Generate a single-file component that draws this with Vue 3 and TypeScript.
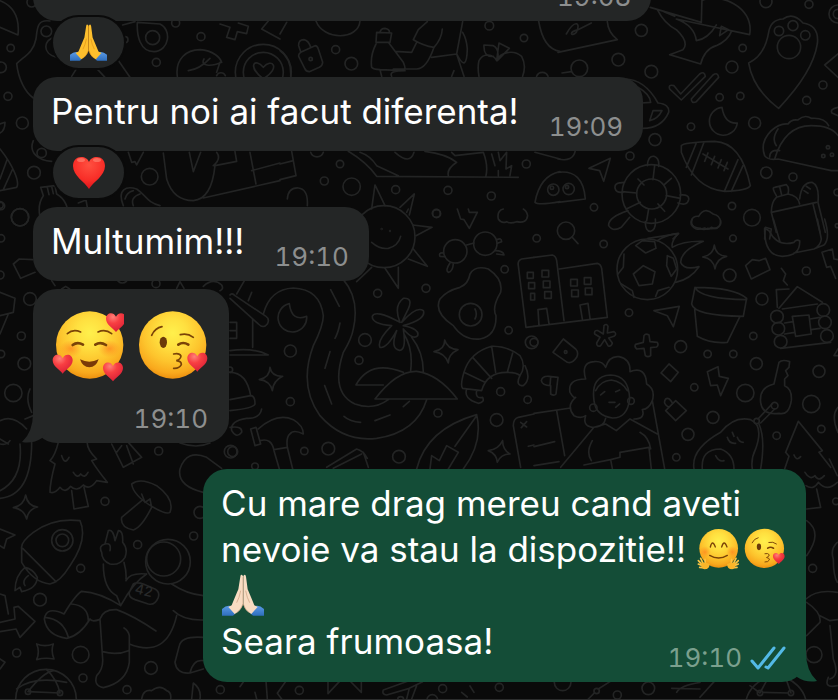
<script setup lang="ts">
type EmojiName = 'pray' | 'heart' | 'hearts-face' | 'kiss' | 'hug'
interface Part { text?: string; emoji?: EmojiName; pale?: boolean }
interface Message {
  id: number
  out?: boolean
  kind: 'line' | 'block' | 'big'
  tail?: boolean
  lines: Part[][]
  time: string
  reaction?: EmojiName
}
interface Doodle { x: number; y: number; d: string; c: number[][] }

const labels: Record<EmojiName, string> = {
  pray: 'Folded hands',
  heart: 'Red heart',
  'hearts-face': 'Smiling face with hearts',
  kiss: 'Face blowing a kiss',
  hug: 'Hugging face',
}

const boxes: Record<EmojiName, number[]> = {
  pray: [42, 46, 126, 126],
  heart: [0, 0, 34, 34],
  'hearts-face': [36, 30, 216, 216],
  kiss: [288, 30, 216, 216],
  hug: [44, 40, 126, 126],
}

function place(name: EmojiName) {
  const [x, y, width, height] = boxes[name]
  return { x, y, width, height }
}

const messages: Message[] = [
  { id: 1, kind: 'line', lines: [[]], time: '19:08', reaction: 'pray' },
  { id: 2, kind: 'line', lines: [[{ text: 'Pentru noi ai facut diferenta!' }]], time: '19:09', reaction: 'heart' },
  { id: 3, kind: 'line', lines: [[{ text: 'Multumim!!!' }]], time: '19:10' },
  { id: 4, kind: 'big', tail: true, lines: [[{ emoji: 'hearts-face' }, { emoji: 'kiss' }]], time: '19:10' },
  {
    id: 5,
    kind: 'block',
    out: true,
    tail: true,
    lines: [
      [{ text: 'Cu mare drag mereu cand aveti' }],
      [{ text: 'nevoie va stau la dispozitie!! ' }, { emoji: 'hug' }, { emoji: 'kiss' }],
      [{ emoji: 'pray', pale: true }],
      [{ text: 'Seara frumoasa!' }],
    ],
    time: '19:10',
  },
]

// Wallpaper tiles: every tile is drawn at three times its size on screen.
const doodles: Doodle[] = [
  {
    x: 0, y: 0,
    c: [[139, 97, 16], [95, 10, 14], [32, 147, 11], [3, 205, 16], [24, 292, 12], [67, 372, 18], [102, 521, 19], [458, 116, 21], [603, 113, 12], [469, 190, 12], [527, 72, 12], [449, 533, 25], [3, 621, 11], [60, 655, 26], [125, 462, 14], [375, 122, 9], [790, 220, 84], [790, 220, 60]],
    d: 'M0 5Q62 30 54 108L0 85M150 66C110 60 112 90 108 120C100 160 75 170 50 194C55 240 75 280 100 297M165 115C130 120 125 165 170 175M412 70C410 110 420 158 462 158C510 155 515 90 480 75L412 70M368 78L405 68M215 232L232 205M290 208L315 235M352 180L390 235M660 75L690 85L680 115L705 122L712 98L740 104L745 82L715 72M805 66L785 90L840 120M532 232C525 180 560 152 600 152C640 155 660 175 665 190C630 205 600 200 612 180M565 215Q600 210 630 178M650 230a14 14 0 0 1 26 0M660 190L650 220M790 240C740 200 765 175 790 205C815 175 845 205 790 240M100 425C85 460 115 485 155 487M0 450C40 500 60 550 50 565L0 575M22 480L0 540M38 510L10 572M0 375L15 370Q15 395 0 402M130 590L122 565L165 560L170 585Q205 605 205 655M130 590Q112 615 120 655M142 565l5 22M155 562l5 22M235 612L258 603L262 625M370 620C350 570 380 560 410 570C440 590 440 610 480 620M375 600Q380 580 400 575M400 620Q390 595 420 585M385 460L395 490L405 488L410 498L430 460M490 462L500 540Q520 605 580 605Q635 600 645 500L710 487L705 458M568 460L580 518L602 460M650 460Q665 480 640 500M750 460L768 555M610 597L840 545M755 515L840 492',
  },
  {
    x: 280, y: 0,
    c: [[167, 152, 12], [214, 194, 19], [628, 80, 13], [732, 117, 11], [180, 495, 11], [133, 546, 12], [215, 563, 26], [347, 572, 12], [504, 574, 12], [634, 591, 12], [469, 643, 12], [739, 495, 12], [92, 180, 5], [820, 572, 17], [816, 566, 5]],
    d: 'M108 66C130 125 235 125 240 66M62 160L105 140Q112 140 115 150L128 190Q128 200 118 205L88 218Q78 218 74 208L56 172Q55 165 62 160M62 158L56 140Q55 122 72 122Q86 125 92 145M288 130L290 100L335 102L330 130ZM300 100Q302 88 315 88Q330 90 328 102M288 135Q270 170 275 205Q280 212 300 212L370 215Q380 212 370 190L325 130M345 157L395 160L410 130M400 122L415 92L442 68M400 122Q430 140 462 145Q440 210 410 210L340 210M462 145Q485 120 487 90M455 175L530 165L548 68M530 165Q560 225 562 150Q560 120 548 100M530 165L552 232M515 232L522 215M300 212L305 232M335 232Q325 215 375 215M650 185C640 165 610 160 597 185Q592 205 597 232M650 185C660 160 700 150 725 172Q740 200 728 232M650 185L657 132L688 148L652 185Q660 150 640 140L612 138Q610 175 640 172M776 66Q790 150 840 157M770 232a18 18 0 0 1 34 0M0 105L20 70M0 155Q35 180 32 232M35 457L48 530L0 542M0 495L40 485M92 460a20 20 0 0 0 38 0M205 457Q260 490 290 532L715 535M240 460Q270 470 290 500L355 530M345 460Q390 500 402 460M435 457Q500 465 530 490Q500 510 505 530M515 460L525 470L610 460Q625 500 618 530M635 465L645 500M655 460L660 485L680 460L678 510L695 500L690 530M655 515V530M22 600Q25 565 55 567Q85 570 82 620M765 460L840 480M840 518Q780 530 765 610Q775 620 840 608M275 630L285 558L315 620M360 625L403 585L388 648',
  },
  {
    x: 558, y: 0,
    c: [[250, 94, 18], [181, 182, 19], [280, 218, 19], [64, 208, 25], [624, 8, 18], [753, 16, 12], [663, 96, 14], [705, 80, 15], [742, 109, 14], [693, 144, 35], [554, 147, 11], [522, 204, 18], [485, 295, 11], [547, 291, 11], [590, 372, 18], [399, 383, 11], [795, 258, 12], [746, 304, 12], [291, 422, 18], [216, 471, 12], [625, 521, 17], [705, 534, 12], [108, 625, 11], [32, 570, 17], [27, 564, 5], [522, 621, 11], [582, 656, 25], [838, 580, 10], [840, 45, 27], [840, 45, 14], [796, 471, 5], [822, 467, 5], [810, 445, 5], [280, 585, 88], [281, 585, 45]],
    d: 'M277 25L430 70L432 0M432 5C480 -20 590 20 575 107L355 60M298 32Q320 75 355 92Q395 130 375 152L335 167L428 195Q440 150 475 140Q510 125 520 98M355 60Q410 80 415 125Q450 120 475 78M485 110L490 82L512 92ZM318 38L350 52M572 192Q620 170 632 100Q638 62 675 60Q705 38 735 72Q785 80 778 135Q765 220 662 328Q585 270 572 192M0 160L178 122Q150 100 148 68M25 105C50 60 70 70 55 100C40 115 30 100 60 92L100 72M12 222L40 218M335 270Q330 255 348 260L368 285L425 225Q440 215 442 232L370 303ZM400 300L465 228Q480 218 482 235L415 308Q400 315 400 300M492 325A42 42 0 1 0 538 372Q500 375 492 325M200 240Q260 240 300 312Q335 315 332 340Q310 390 250 388M240 265Q275 285 278 310L250 312M275 365L285 335L312 335Q300 360 275 365M370 440Q375 430 470 427Q550 430 577 560Q570 575 500 577Q410 570 370 460ZM415 432L385 505M438 430L400 528M540 482L500 575M555 500L520 577M435 465L510 510M450 462l-10 25M470 472l-10 25M490 482l-10 25M508 490l-10 25M93 508L157 478L137 547L125 515ZM0 520Q75 510 82 600L0 610M0 480Q45 490 52 455M290 500l-5 42M240 540l18 18M193 578l43 4M205 630l42 -20M272 630l-6 36M300 615l20 22M325 590l42 8M318 558l22 -20M268 500Q270 470 288 472Q305 478 302 502M200 550Q165 550 172 570Q175 582 195 580M366 588Q395 585 392 602Q388 622 360 612M210 635Q150 655 152 680Q165 700 190 685L215 655M262 668Q262 698 278 697Q295 692 292 660M415 690Q395 680 400 665Q405 650 422 652Q440 622 465 645Q490 650 488 675Q480 695 460 685Q450 695 440 687Q430 692 415 690M620 470Q605 430 640 395Q665 372 690 375Q700 360 720 363Q740 345 760 358Q800 355 812 380M650 480Q680 380 760 380Q820 380 840 410M620 470Q630 485 660 480L820 515L840 515M660 390Q640 420 655 440M635 475Q635 450 665 455M840 165L800 198L840 235M840 325Q815 330 822 342L840 350M655 590Q640 565 650 565L685 557Q695 565 690 585M665 563l6 25M655 595L690 585Q720 590 725 615M655 595Q640 610 640 640L775 610M725 600Q730 550 762 550Q785 560 780 610L802 700M640 640L655 700M765 615L786 700M738 575l12 8M745 562l12 8M620 720L622 685L640 690L635 720M270 718L362 704L345 720',
  },
  {
    x: 534, y: 220,
    c: [[96, 35, 26], [8, 58, 11], [209, 75, 11], [597, 58, 10], [587, 169, 19], [684, 240, 18], [817, 156, 12], [285, 281, 11], [440, 383, 18], [658, 351, 11], [521, 405, 11], [598, 405, 11], [667, 434, 18], [855, 457, 18], [634, 522, 26], [832, 555, 26], [481, 505, 11], [537, 595, 18], [728, 650, 11], [862, 630, 11], [462, 646, 18], [427, 715, 11], [95, 399, 4], [722, 560, 10], [668, 606, 8], [910, 20, 6], [729, 293, 19], [733, 329, 19], [740, 368, 19], [868, 273, 19], [873, 310, 19], [879, 351, 19], [340, 151, 91], [291, 546, 10], [178, 566, 11], [0, 370, 12]],
    d: 'M114 54L132 74M475 0Q465 25 500 28Q510 35 520 28Q560 35 560 5M692 28Q690 110 745 112Q800 110 797 65Q785 60 780 70Q730 85 705 35ZM718 0L738 68M850 0L862 60Q860 80 840 90L780 102M872 0Q890 60 870 78L845 88M305 80L325 65L362 68L366 88L335 102ZM298 165L328 140L363 158L355 195L315 200ZM270 105L268 145L252 165M400 110L418 118L428 150L412 172L398 140ZM262 195L295 215L300 235M365 232L372 215L405 205M370 65Q400 45 433 43Q410 70 415 85Q450 65 508 67Q440 95 440 130Q450 155 495 143Q470 180 425 190M541 78Q545 110 578 112Q548 118 543 150Q538 118 506 114Q538 108 541 78M635 140L655 122L675 125L695 118L708 152L652 180ZM0 115L55 108Q65 110 68 125L90 305M76 150L190 133Q200 135 203 148L220 295L0 322M15 320L12 272L38 268L45 315M145 300L138 258L162 253L168 298M24 154h20v20h-20zM28 186h20v20h-20zM32 218h20v20h-20zM110 181h20v20h-20zM151 176h20v20h-20zM113 213h20v20h-20zM154 207h20v20h-20zM483 205L473 255Q480 290 628 292L638 238Q600 205 483 205Q500 240 638 242M482 270L490 352Q530 375 580 370L618 292M360 275L436 262L418 323L400 290ZM735 268L790 203L865 250M730 265L727 212L765 210M745 270L850 255M740 388L890 370M775 292L825 288L832 345L785 352ZM752 312L778 308M828 300L858 295M752 345L782 340M832 332L858 328M742 148L755 165L748 185L760 198M864 100L895 90L900 120L912 122M864 100L878 145L890 142L905 178M208 345L210 320Q218 312 222 322L220 342L240 338Q250 345 240 352L224 357L235 372Q232 385 222 380L212 362L200 380Q188 385 188 372L198 355L182 345Q180 332 192 335ZM330 350Q335 342 345 348L348 368L370 370Q375 378 368 384L350 386L350 410Q342 416 334 410L330 388L308 390Q300 383 305 376L328 370ZM88 360L125 390Q135 400 128 415Q115 435 100 430L57 400ZM405 435L433 460L410 488L381 462ZM520 458L552 443L556 472L583 478L560 530L550 498L530 500ZM395 575L425 545L457 575L425 605ZM405 565Q385 555 395 540Q405 533 415 552M720 495L735 430Q745 420 767 428L765 445L755 455L762 470L752 480L752 500Q775 510 772 545Q765 590 735 583Q685 590 680 550Q675 505 720 495M672 600L714 555M680 612L722 570M480 750Q470 690 560 640Q600 590 650 602Q690 620 665 690Q650 720 655 750M675 615Q695 660 680 750M505 750Q500 690 560 690Q600 705 600 750M580 655q5 20 25 18M595 640l5 12M610 655q5 15 18 15M545 710q10 20 25 15M755 700L793 607L865 695L855 700L890 745M755 700L765 712L752 750M780 708q8 20 20 5M912 390L900 410h12M912 565Q890 590 912 640M155 480Q140 430 180 428Q205 425 215 445Q225 410 255 413Q290 420 288 458Q335 440 338 495Q365 510 355 545Q345 570 325 572Q335 600 300 600M155 480Q100 480 108 520Q120 540 125 535Q95 560 120 590Q140 600 155 590Q145 620 175 625Q210 625 215 598M180 545Q170 470 230 468Q285 470 287 540Q280 598 235 597Q185 590 180 545M185 515Q200 485 232 483Q265 488 280 515M200 528l12 -10M245 518l12 -5M225 550l18 0M245 565l12 -10M80 745L180 625L215 615L247 635L288 600L370 645M355 545L392 750M175 665Q155 700 172 725M150 738L230 722L235 748M230 722L258 715V700L345 685L352 750M318 640Q345 655 350 690M0 583L110 567M68 575L92 710M0 683L62 668M0 740L75 728M22 485Q25 470 45 472L72 475L66 525Q60 532 50 525L50 500Q25 500 22 485M50 475L48 500',
  },
  {
    x: 230, y: 210,
    c: [[620, 14, 12], [676, 127, 35], [766, 104, 35], [824, 181, 11], [588, 238, 12], [443, 253, 12], [405, 393, 19], [387, 454, 12], [181, 426, 18], [836, 364, 11], [722, 317, 34], [812, 548, 12], [893, 572, 11], [800, 633, 19], [624, 612, 12], [181, 578, 12], [223, 726, 11], [295, 719, 19], [507, 743, 19], [8, 728, 15], [75, 772, 10], [462, 83, 93], [905, 400, 19], [455, 60, 1], [480, 66, 1]],
    d: 'M425 100Q450 122 475 118Q505 110 512 82M548 48L606 55L558 80M550 120L592 172L535 150M505 175V238L465 178M530 10L535 0M425 175L380 218M710 108L732 102M800 92Q815 85 815 98L802 103M795 125Q820 125 822 138L800 135M640 132Q625 130 630 142L645 143M660 162Q645 185 655 190Q668 188 670 165M682 0L692 30L702 32L718 58L742 10L718 10L715 0M820 0Q800 5 805 30Q815 45 830 38Q840 45 860 38Q890 45 893 20Q890 5 880 0M720 195Q735 168 775 180Q820 210 812 250Q785 295 798 320Q800 380 750 390Q700 395 670 350Q610 310 630 270Q650 245 690 235Q715 225 720 195M735 300Q743 315 735 330M510 340Q490 290 520 268Q550 265 535 300L515 340Q560 290 580 305Q590 330 520 350Q570 360 563 380Q550 395 520 360Q530 425 508 424Q480 420 500 365Q470 420 450 415Q440 395 485 350Q425 345 427 322Q435 300 510 340M522 375Q550 420 542 485M545 385Q580 430 580 488M378 528Q420 450 520 490M378 528H460M435 570Q500 485 560 487Q625 495 682 570ZM340 212Q390 270 370 360Q365 390 340 430Q300 550 375 585Q430 605 475 572M100 315Q120 240 190 237Q270 240 280 320Q280 350 250 410Q205 530 270 620Q340 700 440 688Q560 670 590 572M302 242L328 292M330 342Q325 370 315 388M300 428L285 478M284 530L305 585M342 622Q360 638 392 640M435 635L480 618M520 593L538 577M178 284A43 43 0 1 0 230 322Q185 340 178 284M0 268L85 345Q100 360 112 345Q120 330 108 322L15 260Q5 250 0 258M68 330V415M0 425Q70 415 115 438H0M55 275L65 250M0 340H20V388H0M0 365H20M20 255L45 212M120 475Q125 503 158 502Q130 515 127 545Q120 515 88 512Q120 505 120 475M644 393Q652 420 684 422Q655 435 655 462Q645 432 612 428Q645 422 644 393M818 695Q818 722 840 735Q812 735 802 760Q800 735 775 725Q805 722 818 695M0 490Q50 490 62 560Q75 560 75 585Q70 598 0 605M0 572L62 560M62 660L78 655L92 705L75 710ZM85 660Q140 610 190 632Q220 650 220 675Q190 660 180 675Q168 685 172 715L188 780M90 695Q125 685 132 725L148 780M132 722L172 715M95 600Q90 630 50 628Q0 635 5 665Q20 690 35 670Q38 650 0 655M290 775L380 720Q400 725 412 748M310 778L395 735M400 730L415 775M560 780Q590 660 740 617Q760 700 700 780M740 620L675 712M600 780L605 740L628 755L650 710L685 730L655 780M785 412Q720 430 702 490Q690 530 698 538L755 545Q770 490 830 490Q860 490 870 500Q890 470 870 440Q830 410 785 412M785 412L797 490M728 445L785 508M702 490L765 520M848 432L832 490M870 500Q855 530 880 530Q905 510 885 470M710 540Q700 570 745 583Q765 580 758 565Q735 570 740 545M912 145L875 150Q862 155 865 170L888 355L912 352M892 190h18v18h-18zM896 221h18v18h-18zM902 253h12v20h-12zM912 615L865 625Q850 630 850 650L872 775M872 640l18 14M890 638l-16 18M895 712L912 708',
  },
  {
    x: 0, y: 200,
    c: [[60, 55, 26], [90, 300, 19], [64, 411, 12], [73, 494, 19], [40, 582, 26], [3, 118, 11], [0, 228, 12], [3, 465, 11], [468, 254, 12], [367, 235, 17], [690, 512, 8], [0, 18, 10]],
    d: 'M40 195L58 180L98 182M40 195L62 238L105 220M0 280L45 298L40 340L0 350M25 345L0 405M155 245l10 15M185 270l12 -8l12 8M530 268L540 248L552 268M610 262Q640 235 665 258Q672 270 660 275M0 665Q40 645 80 690M75 660L100 650M90 570Q75 600 95 640M0 735Q20 740 30 725',
  },
  {
    x: 0, y: 430,
    c: [[476, 66, 12], [692, 68, 19], [315, 217, 12], [581, 321, 12], [413, 347, 12], [187, 334, 32], [187, 334, 19], [242, 418, 12], [120, 512, 19], [600, 250, 18], [50, 672, 12], [242, 677, 25], [453, 717, 19], [249, 747, 12], [381, 782, 12], [661, 782, 12], [504, 398, 67], [491, 390, 51], [84, 788, 8], [180, 792, 8], [138, 812, 91]],
    d: 'M95 40Q95 200 0 208M60 45Q70 150 0 185M0 30l25 15M175 40Q165 80 150 95L165 105Q150 160 150 190Q165 195 180 175Q195 195 212 172Q230 190 250 168Q270 185 290 155L322 160Q290 120 275 95L290 90Q260 60 262 40M215 185L222 240L265 232L252 175M185 80q10 30 22 5M220 130q12 20 22 5q12 15 22 -5M335 45L370 115L425 85L385 40M365 50L350 70M380 50L400 105M395 165Q420 145 470 170Q525 210 510 250Q500 258 460 235Q400 200 395 165M425 215L365 265Q360 295 400 303Q425 295 455 235M425 195l10 25l15 -10l5 25M610 190Q530 170 540 120Q560 60 620 85L665 118M540 42Q590 60 630 42M77 198Q83 232 113 234Q85 240 80 270Q72 240 40 236Q72 230 77 198M0 300L45 318L20 330L12 358L0 350M65 360Q60 340 100 310Q160 265 240 275Q265 330 210 410Q180 460 150 465Q100 460 65 400ZM68 358L168 458M75 415Q45 440 45 485L60 475L65 488Q110 480 112 445M75 415Q100 420 112 445M85 440Q65 455 75 470M305 370Q295 350 315 345L325 305Q340 300 345 335L355 305Q370 305 368 340Q385 360 375 385Q360 410 330 405Q305 395 305 370M315 345Q335 340 330 365M310 405Q310 480 350 500L362 530M372 400Q380 430 378 450M378 455Q390 430 440 435M400 465Q410 458 430 465L465 480Q480 488 475 505Q465 530 445 525L405 512Q385 505 388 490ZM440 435Q400 460 362 530Q300 490 245 487Q225 500 192 555Q140 530 133 570Q140 620 200 628Q240 620 270 570Q275 580 298 572M135 565Q190 570 205 625M215 525Q265 530 265 575M300 570Q310 540 350 542Q400 560 468 606M300 570L308 690Q310 720 290 740Q280 770 310 776Q380 760 388 700V620Q385 605 372 597M308 668Q350 680 385 665M388 645Q500 690 530 560M515 465Q560 495 610 500M520 545Q550 575 610 573M0 495L15 500L25 555M0 580L45 570L42 535L55 532L105 577L60 625L48 600L0 608M110 645Q135 655 160 645Q152 665 162 690Q135 685 110 692Q120 668 110 645M610 625Q545 620 538 650L525 700Q530 735 570 732L610 720M570 732Q580 690 610 695M50 780Q100 740 200 760M84 788Q130 730 160 725M84 788L180 792M140 722Q170 750 180 792M425 810Q430 780 455 785Q480 765 500 785Q515 790 512 810M575 810L580 762Q605 780 600 810M0 690L15 700L0 720',
  },
  {
    x: 600, y: 460,
    c: [[642, 587, 24], [638, 328, 12], [145, 688, 19], [52, 708, 12], [480, 702, 8], [573, 702, 8], [528, 745, 92], [708, 127, 10]],
    d: 'M615 40q15 25 30 10q10 20 28 0M688 0L712 50M618 80Q640 95 655 70Q680 100 712 70M650 90L662 145L620 150M620 185Q670 220 620 290M712 250Q690 270 700 300Q700 350 712 370M618 420Q650 390 712 400M620 430Q665 460 660 490L620 530M660 470L690 485L712 482M690 500L700 600Q720 650 690 660M712 680Q670 690 685 655M230 700Q240 680 300 670M300 715L345 665M215 688L300 690M450 680L480 702L500 665M488 700L565 702M573 702L560 665',
  },
  {
    x: 240, y: 676,
    c: [[178, 46, 12], [608, 41, 12], [778, 37, 12], [968, 22, 25], [1070, 48, 8], [577, 75, 16], [482, 74, 9]],
    d: 'M0 35L12 18M78 18L82 72M138 18L112 55L125 72M45 52L50 72M264 18V56L298 20M330 18L364 52V18M548 20L508 40L440 60Q425 58 430 45L505 18M508 40L500 72M530 32L515 72M665 52L682 66M690 33L702 52M1110 20L1075 42M1062 55L1045 72',
  },
]
</script>

<template>
  <main class="chat">
    <svg class="defs" aria-hidden="true">
      <defs>
        <radialGradient id="face" cx=".5" cy=".32" r=".7">
          <stop offset="0" stop-color="#fff04c" />
          <stop offset=".3" stop-color="#ffe040" />
          <stop offset=".62" stop-color="#fdc42d" />
          <stop offset=".85" stop-color="#f9a91d" />
          <stop offset="1" stop-color="#e98a0c" />
        </radialGradient>
        <radialGradient id="blush">
          <stop offset="0" stop-color="#ff7a1c" stop-opacity=".65" />
          <stop offset="1" stop-color="#ff8a20" stop-opacity="0" />
        </radialGradient>
        <radialGradient id="red" cx=".35" cy=".2" r=".85">
          <stop offset="0" stop-color="#ff8078" />
          <stop offset=".4" stop-color="#f83f42" />
          <stop offset="1" stop-color="#d81c35" />
        </radialGradient>
        <radialGradient id="love" cx=".5" cy=".25" r=".8">
          <stop offset="0" stop-color="#ff5040" />
          <stop offset=".6" stop-color="#f82d27" />
          <stop offset="1" stop-color="#d40f1c" />
        </radialGradient>
        <linearGradient id="sleeve" x1="0" y1="0" x2="0" y2="1">
          <stop offset="0" stop-color="#5a9ae6" />
          <stop offset="1" stop-color="#2f6fbd" />
        </linearGradient>
        <path id="mini" fill="url(#red)" d="M0 31C-10 19 -30 8 -30 -9C-30 -27 -8 -32 0 -15C8 -32 30 -27 30 -9C30 8 10 19 0 31Z" />
        <symbol id="heart" viewBox="0 0 34 34">
          <path fill="url(#love)" d="M17 33C13 26 1 20 1 10C1 4 5 1 9 1C13 1 16 3 17 6C18 3 21 1 25 1C29 1 33 4 33 10C33 20 21 26 17 33Z" />
          <ellipse cx="9" cy="4" rx="4" ry="2" fill="#ff9c88" opacity=".5" />
          <ellipse cx="25" cy="4" rx="4" ry="2" fill="#ff9c88" opacity=".5" />
        </symbol>
        <symbol id="pray" viewBox="42 46 126 126">
          <path fill="url(#sleeve)" d="M42 151Q56 138 69 142L84 158Q80 171 74 171H42ZM168 151Q154 138 141 142L126 158Q130 171 136 171H168Z" />
          <path class="skin" d="M105 52Q98 43 97 54L91 92Q84 108 71 140L61 145L80 166Q100 156 105 136Z" />
          <path class="skin" d="M106 52Q112 43 114 54L119 92Q126 108 139 140L149 145L130 166Q110 156 106 136Z" />
          <path class="crease" d="M105 54V136Q100 152 86 162M106 136Q110 152 124 162M98 96Q94 118 86 132M113 96Q117 118 125 132" />
        </symbol>
        <symbol id="hearts-face" viewBox="36 30 216 216">
          <circle cx="149" cy="135" r="101" fill="url(#face)" />
          <ellipse cx="93" cy="146" rx="34" ry="26" fill="url(#blush)" />
          <ellipse cx="208" cy="146" rx="34" ry="26" fill="url(#blush)" />
          <path class="brow" d="M82 101Q99 86 122 96M174 96Q196 86 215 101" />
          <path class="eye" d="M98 135Q112 124 129 134M166 134Q181 124 198 135" />
          <path fill="#7a3a08" d="M120 178Q148 192 176 178Q168 202 148 202Q128 202 120 178Z" />
          <use href="#mini" x="228" y="65" />
          <use href="#mini" x="68" y="190" />
          <use href="#mini" x="219" y="213" />
        </symbol>
        <symbol id="kiss" viewBox="288 30 216 216">
          <circle cx="398" cy="135" r="101" fill="url(#face)" />
          <path class="brow" d="M335 106Q345 84 366 80M421 104Q442 98 460 112" />
          <ellipse cx="370" cy="127" rx="11" ry="17" fill="#6b3a0a" />
          <path class="eye" d="M415 134Q429 124 445 134" />
          <path class="lips" d="M401 162Q418 158 423 168Q422 178 409 182Q425 184 424 194Q418 206 401 205" />
          <use href="#mini" x="472" y="184" />
        </symbol>
        <symbol id="hug" viewBox="44 40 126 126">
          <circle cx="109" cy="101" r="58" fill="url(#face)" />
          <circle cx="68" cy="112" r="18" fill="url(#blush)" />
          <circle cx="150" cy="112" r="18" fill="url(#blush)" />
          <path class="hug-line" d="M84 97Q90 73 99 97M118 97Q125 73 134 97M82 122Q109 138 135 122" />
          <g class="fingers">
            <path d="M62 154L48 148M62 152L48 138M64 150L55 131M70 154L68 134M68 160L52 158" />
            <path d="M154 154L168 148M154 152L168 138M152 150L161 131M146 154L148 134M148 160L164 158" />
          </g>
          <path fill="#f9b52a" d="M56 146Q68 140 82 148Q82 164 66 164Q56 162 56 146ZM160 146Q148 140 134 148Q134 164 150 164Q160 162 160 146Z" />
        </symbol>
      </defs>
    </svg>

    <svg class="wallpaper" viewBox="0 0 838 700" preserveAspectRatio="xMidYMax slice" aria-hidden="true">
      <g v-for="(tile, i) in doodles" :key="i" :transform="`translate(${tile.x} ${tile.y}) scale(.3333)`">
        <circle v-for="(c, j) in tile.c" :key="j" :cx="c[0]" :cy="c[1]" :r="c[2]" />
        <path :d="tile.d" />
      </g>
      <text class="suit-number" transform="translate(134 594) rotate(14)">42</text>
    </svg>

    <section class="thread" aria-label="Messages">
      <article
        v-for="m in messages"
        :key="m.id"
        class="message"
        :class="{ out: m.out, first: m.id === 1 }"
      >
        <div class="bubble" :class="m.kind">
          <svg v-if="m.tail" class="tail" viewBox="0 0 24 30" aria-hidden="true">
            <path d="M11 0Q11 19 0 29Q11 31 20 25L24 20V0Z" />
          </svg>
          <div class="body">
            <p v-for="(line, i) in m.lines" :key="i" class="text">
              <template v-for="(part, j) in line" :key="j">
                <svg
                  v-if="part.emoji"
                  class="emoji"
                  :class="{ pale: part.pale }"
                  :viewBox="boxes[part.emoji].join(' ')"
                  role="img"
                  :aria-label="labels[part.emoji]"
                ><use :href="'#' + part.emoji" v-bind="place(part.emoji)" /></svg>
                <span v-else>{{ part.text }}</span>
              </template>
            </p>
          </div>
          <footer class="meta">
            <time>{{ m.time }}</time>
            <svg v-if="m.out" class="ticks" viewBox="0 0 36 24" role="img" aria-label="Read">
              <path d="M2 15L8 22L24 2M16 21L18 22L34 2" />
            </svg>
          </footer>
        </div>
        <div v-if="m.reaction" class="reaction">
          <svg
            class="reaction-icon"
            :class="m.reaction"
            :viewBox="boxes[m.reaction].join(' ')"
            role="img"
            :aria-label="labels[m.reaction]"
          ><use :href="'#' + m.reaction" v-bind="place(m.reaction)" /></svg>
        </div>
      </article>
    </section>
  </main>
</template>

<style>
body {
  background: #0a0a0a;
}
</style>

<style scoped>
.chat {
  --incoming: #242626;
  --outgoing: #144d37;
  --skin: #fdbf2d;
  --crease: #d98a12;
  box-sizing: border-box;
  position: relative;
  height: 100vh;
  overflow: hidden;
  display: flex;
  flex-direction: column;
  justify-content: flex-end;
  border-bottom: 1px solid #2c2d2d;
  background: #0a0a0a;
  color: #fff;
  font-family: Inter, "Liberation Sans", sans-serif;
}
.defs {
  position: absolute;
  width: 0;
  height: 0;
}
.wallpaper {
  position: absolute;
  inset: 0;
  width: 100%;
  height: 100%;
  fill: none;
  stroke: #232424;
  stroke-width: 5;
  stroke-linecap: round;
  stroke-linejoin: round;
}
.suit-number {
  font: 500 14px Inter, sans-serif;
  fill: #282929;
  stroke: none;
}
.thread {
  position: relative;
  display: flex;
  flex-direction: column;
  gap: 8px;
  padding: 0 32px 17px 33px;
}
.message {
  display: flex;
  flex-direction: column;
  align-items: flex-start;
}
.message.out {
  align-items: flex-end;
  margin-top: 18px;
}
.bubble {
  box-sizing: border-box;
  position: relative;
  display: flex;
  align-items: flex-end;
  gap: 30px;
  padding: 11px 20px 9px 18px;
  border-radius: 24px;
  background: var(--incoming);
}
.first .bubble {
  width: 80%;
  justify-content: flex-end;
}
.out .bubble {
  width: 78%;
  background: var(--outgoing);
}
.bubble.block {
  display: grid;
  grid-template-columns: minmax(0, 1fr);
}
.bubble.block > .body,
.bubble.block > .meta {
  grid-area: 1 / 1;
}
.bubble.big {
  flex-direction: column;
  gap: 22px;
  padding: 21px 21px 9px 19px;
}
.body {
  margin-bottom: 8px;
}
.block .body {
  margin-bottom: 9px;
}
.big .body {
  margin: 0;
}
.text {
  margin: 0;
  min-height: 46px;
  font-size: 35px;
  line-height: 46px;
  white-space: pre;
}
.big .text {
  display: flex;
  gap: 12px;
}
.emoji {
  width: 42px;
  height: 42px;
  margin: 0 3px 0 1px;
  vertical-align: -8px;
}
.big .emoji {
  width: 72px;
  height: 72px;
  margin: 0;
}
.pale {
  --skin: #f8dcc2;
  --crease: #c99b7c;
}
.meta {
  display: flex;
  align-items: center;
  justify-content: flex-end;
  gap: 8px;
  color: #8d8f8f;
  font-size: 26px;
  font-variant-numeric: tabular-nums;
  line-height: 30px;
}
.block .meta {
  align-self: end;
  justify-self: end;
}
.out .meta {
  color: #7ba08e;
}
.ticks {
  width: 36px;
  height: 24px;
  fill: none;
  stroke: #53b9e6;
  stroke-width: 3;
  stroke-linecap: round;
  stroke-linejoin: round;
}
.tail {
  position: absolute;
  left: -11px;
  bottom: 0;
  width: 24px;
  height: 30px;
  fill: var(--incoming);
}
.out .tail {
  left: auto;
  right: -11px;
  fill: var(--outgoing);
  transform: scaleX(-1);
}
.reaction {
  position: relative;
  display: flex;
  align-items: center;
  justify-content: center;
  width: 71px;
  height: 51px;
  margin: -4px 0 1px 20px;
  border-radius: 26px;
  background: var(--incoming);
  box-shadow: 0 0 0 2px #0a0a0a;
}
.reaction-icon {
  width: 37px;
  height: 37px;
}
.reaction-icon.heart {
  width: 34px;
  height: 34px;
}
.skin {
  fill: var(--skin);
}
.crease {
  fill: none;
  stroke: var(--crease);
  stroke-width: 2;
}
.brow,
.eye,
.lips,
.hug-line {
  fill: none;
  stroke: #7a4308;
  stroke-width: 5;
  stroke-linecap: round;
}
.eye {
  stroke-width: 8;
}
.hug-line {
  stroke-width: 4;
}
.fingers {
  fill: none;
  stroke: #fbc544;
  stroke-width: 5;
  stroke-linecap: round;
}
</style>
